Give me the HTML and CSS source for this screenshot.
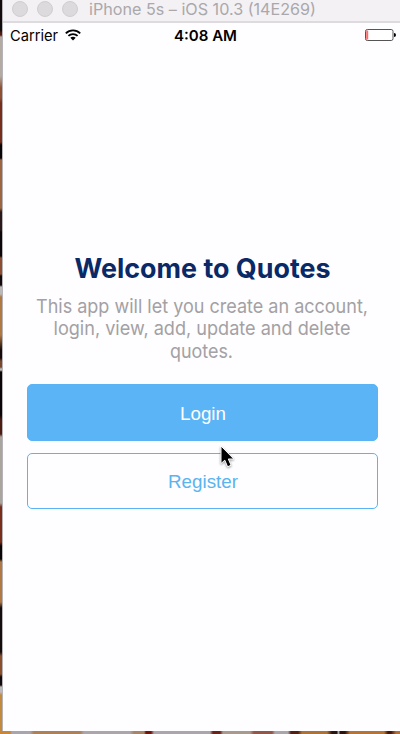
FILE: index.html
```html
<!DOCTYPE html>
<html lang="en">
<head>
<meta charset="utf-8">
<title>Quotes</title>
<link rel="stylesheet" href="styles.css">
</head>
<body>
<div class="desktop">
  <div class="window">
    <header class="titlebar">
      <div class="lights"><i></i><i></i><i></i></div>
      <svg class="window-title" width="240" height="22"><text x="0" y="15" textLength="227" lengthAdjust="spacingAndGlyphs">iPhone 5s – iOS 10.3 (14E269)</text></svg>
    </header>
    <div class="status">
      <div class="carrier">
        <svg width="50" height="22"><text x="0" y="17" textLength="48" lengthAdjust="spacingAndGlyphs">Carrier</text></svg>
        <svg class="wifi" width="16" height="12" viewBox="0 0 16 12"><path d="M.8 4.3C4.8.3 11.2.3 15.2 4.3M3.4 6.9C6 4.4 10 4.4 12.6 6.9" fill="none" stroke="#000" stroke-width="1.8"/><path d="M5.3 8.8Q8 6.5 10.7 8.8L8 11.5Z"/></svg>
      </div>
      <svg class="time" width="66" height="22"><text x="1" y="17" textLength="63" lengthAdjust="spacingAndGlyphs">4:08 AM</text></svg>
      <svg class="battery" width="31" height="12" viewBox="0 0 31 12"><rect x=".5" y=".5" width="27.5" height="11" rx="1.8" fill="#fff" stroke="#555"/><path d="M1.2 1.5h2v9h-2z" fill="#ff6b68"/><path d="M29 4q2 0 2 2t-2 2z"/></svg>
    </div>
    <main class="screen">
      <h1><svg width="260" height="36"><text x="1.5" y="26" textLength="256" lengthAdjust="spacingAndGlyphs">Welcome to Quotes</text></svg></h1>
      <div class="intro">
        <svg width="350" height="22"><text x="9" y="17" textLength="332" lengthAdjust="spacingAndGlyphs">This app will let you create an account,</text></svg>
        <svg width="350" height="22"><text x="26.5" y="17" textLength="297" lengthAdjust="spacingAndGlyphs">login, view, add, update and delete</text></svg>
        <svg width="350" height="24"><text x="143" y="17.5" textLength="63" lengthAdjust="spacingAndGlyphs">quotes.</text></svg>
      </div>
      <button class="btn login"><svg width="48" height="26"><text x="1" y="19.5" textLength="46" lengthAdjust="spacingAndGlyphs">Login</text></svg></button>
      <button class="btn register"><svg width="72" height="26"><text x="1" y="19.5" textLength="70" lengthAdjust="spacingAndGlyphs">Register</text></svg></button>
    </main>
  </div>
  <svg class="cursor" width="18" height="26" viewBox="0 0 18 26"><path d="M2 2V19.5L5.8 16.2L8.6 22.8L12.1 21.2L9.3 15H14.8Z" fill="#000" stroke="#fff" stroke-width="1"/></svg>
</div>
</body>
</html>
```
FILE: styles.css
```css
* { box-sizing: border-box; }
body { margin: 0; font-family: Inter, "Liberation Sans", sans-serif; }
svg { display: block; flex: none; overflow: visible; }
.desktop {
  position: relative;
  width: 400px;
  height: 734px;
  padding: 0 0 3px 2px;
  overflow: hidden;
  background:
    linear-gradient(90deg, #c98636 0 10px, #aaa5ac 12px 30px, #ad8058 34px 80px, #aaa6aa 84px 130px, #a78568 134px 144px, #6f160c 146px 151px, #aaa6ab 154px 210px, #682418 213px 220px, #a99a90 223px 250px, #935648 254px 272px, #aaa6a9 275px 288px, #512013 291px 298px, #ad7238 302px 327px, #291411 332px 337px, #aaa 338px 339px, #2c120a 340px 345px, #b57436 350px 384px, #421509 388px 391px, #b26d38 396px) 0 100% / 400px 3px no-repeat,
    linear-gradient(#120a0b 0 30px, #541c13 33px 35px, #b4aaa4 37px 76px, #8d5031 88px 98px, #762d1c 103px 142px, #090506 145px 158px, #9c6740 160px 208px, #291817 212px 230px, #0b0608 232px 256px, #8b4e33 258px 274px, #120a0b 276px 285px, #bbb8b8 287px 294px, #b17942 297px 335px, #140908 350px 358px, #79472c 361px 367px, #bbb 369px 370px, #090506 372px 415px, #4c1c12 420px 434px, #aaa49f 437px 503px, #792e1b 507px 542px, #090506 546px 559px, #b07843 562px 602px, #130c0c 608px 652px, #89502d 656px 674px, #120a0b 677px 685px, #bcbaba 687px 692px, #c38a3e 695px) 0 0 / 3px 734px no-repeat;
}
.window {
  height: 731px;
  border-left: 1px solid #b5b3b8;
  background: #fefdff;
}
.titlebar {
  display: flex;
  height: 23px;
  background: #f3f1f4;
  border-bottom: 2px solid #dddbde;
}
.lights { display: flex; gap: 9px; padding: 1px 0 0 9px; width: 86px; }
.lights i { width: 16px; height: 16px; border-radius: 50%; background: #dcdadc; border: 1px solid #d0ced1; }
.window-title { font-size: 16px; fill: #aaa8ab; }
.status {
  display: flex;
  align-items: center;
  height: 24px;
  padding: 0 4px 0 7px;
  font-size: 15px;
}
.carrier { display: flex; gap: 5px; align-items: center; width: 163px; }
.time { font-weight: 600; }
.battery { margin-left: auto; }
.screen { padding: 205px 22px 0 24px; }
h1 { margin: 0 0 8px; height: 36px; display: flex; justify-content: center; font-size: 27px; font-weight: 700; fill: #092967; }
.intro { height: 88px; font-size: 19px; fill: #a3a1a4; }
.btn {
  display: flex;
  align-items: center;
  justify-content: center;
  width: 351px;
  margin: 0;
  padding: 0;
  border: 1px solid #5ab4f4;
  border-radius: 5px;
  background: transparent;
  font: 19px "Liberation Sans", sans-serif;
  fill: #5ab4ef;
}
.login { height: 57px; margin-bottom: 12px; background: #5ab4f5; fill: #fff; }
.register { height: 56px; }
.cursor { position: absolute; left: 219px; top: 444px; filter: drop-shadow(0 1px 1px #0006); }
```
